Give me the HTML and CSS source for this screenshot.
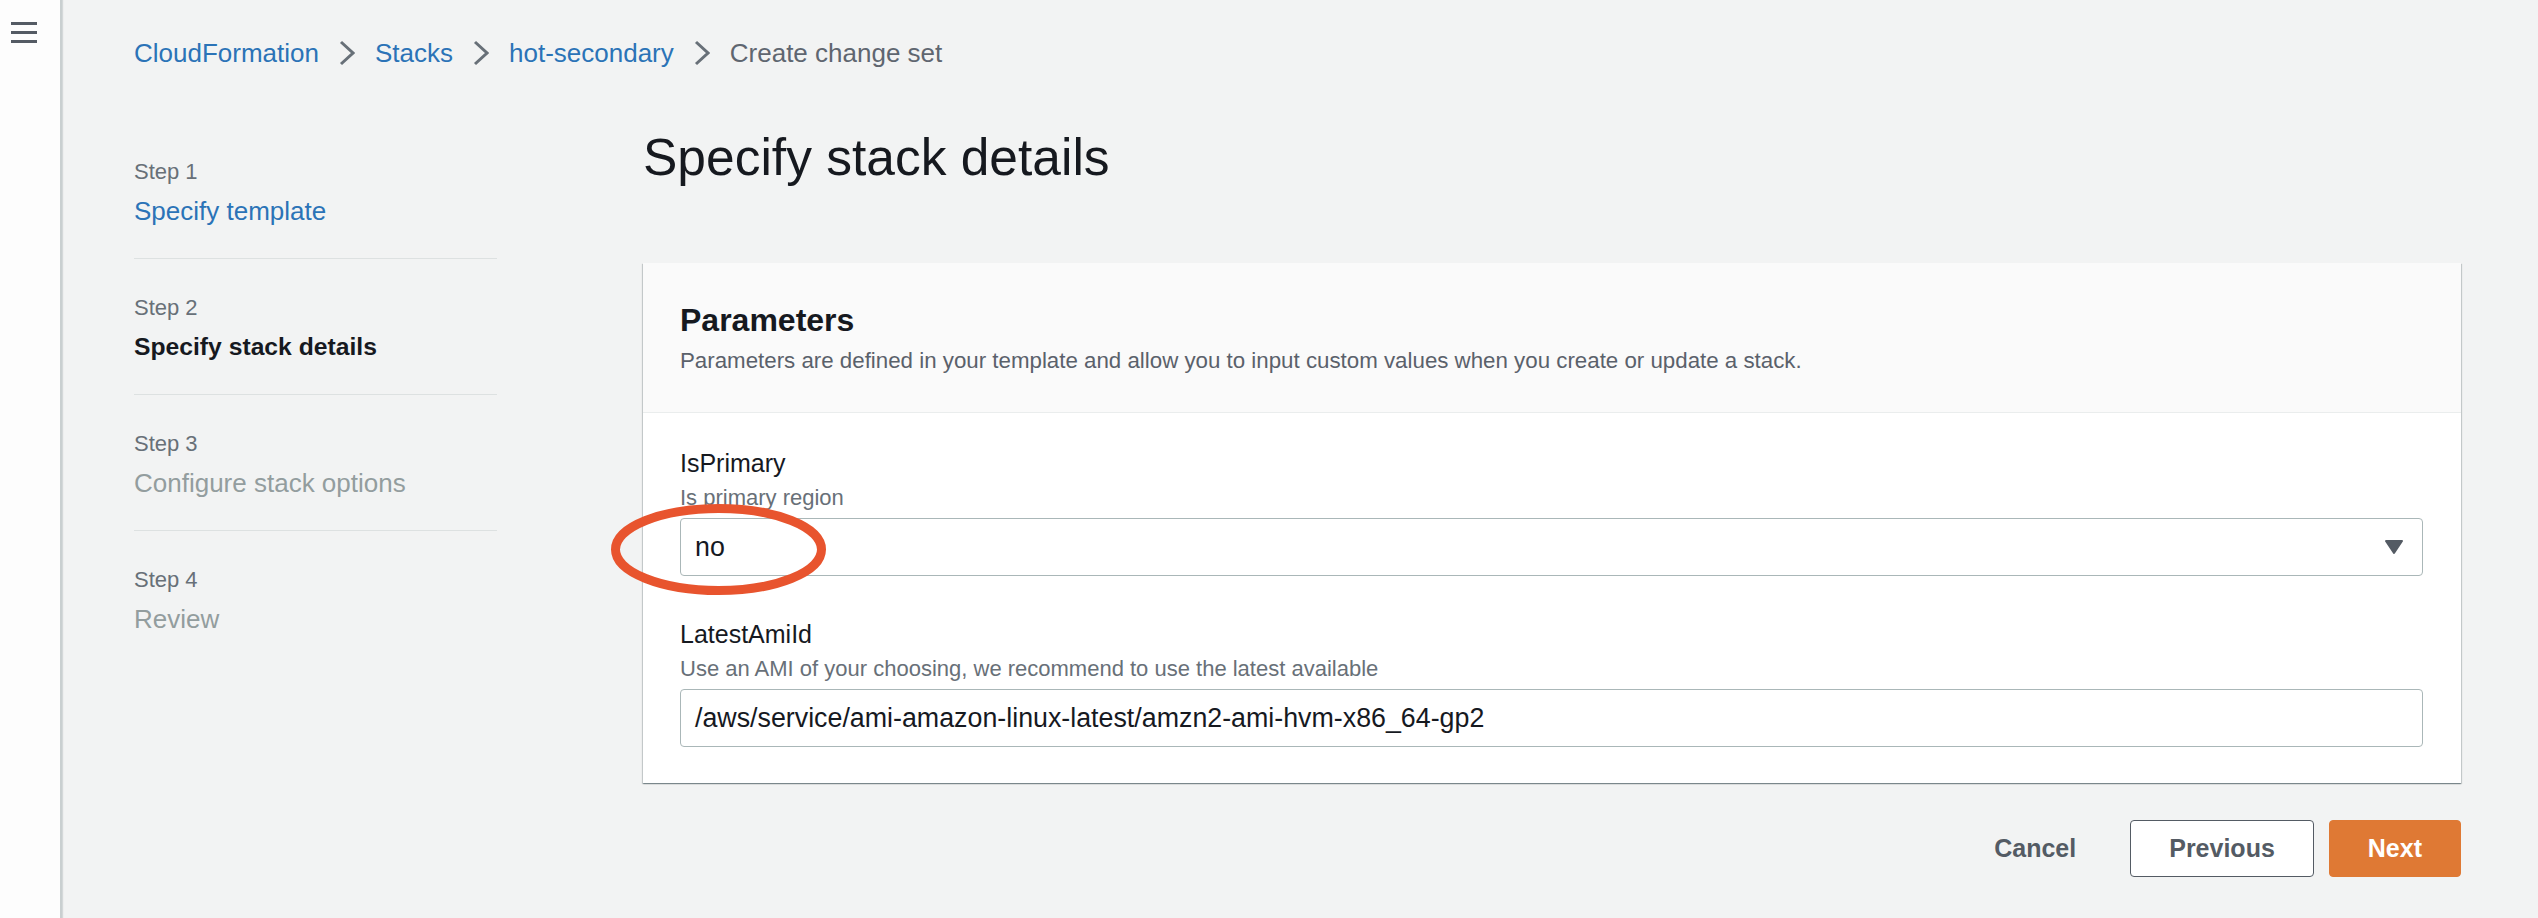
FILE: index.html
```html
<!DOCTYPE html>
<html lang="en">
<head>
<meta charset="utf-8">
<title>Create change set - CloudFormation</title>
<link rel="stylesheet" href="styles.css">
</head>
<body>
<div class="app">
  <aside class="sidebar">
    <button class="menu" aria-label="Open navigation"><span></span><span></span><span></span></button>
  </aside>
  <main class="main">
    <nav class="crumbs">
      <a class="crumb-link">CloudFormation</a>
      <svg class="chev" viewBox="0 0 16 26" width="16" height="26"><polyline points="2,2 14,13 2,24" /></svg>
      <a class="crumb-link">Stacks</a>
      <svg class="chev" viewBox="0 0 16 26" width="16" height="26"><polyline points="2,2 14,13 2,24" /></svg>
      <a class="crumb-link">hot-secondary</a>
      <svg class="chev" viewBox="0 0 16 26" width="16" height="26"><polyline points="2,2 14,13 2,24" /></svg>
      <span class="crumb-current">Create change set</span>
    </nav>
    <div class="layout">
      <ol class="steps">
        <li class="step">
          <div class="step-num">Step 1</div>
          <div class="step-title done">Specify template</div>
        </li>
        <li class="step">
          <div class="step-num">Step 2</div>
          <div class="step-title current">Specify stack details</div>
        </li>
        <li class="step">
          <div class="step-num">Step 3</div>
          <div class="step-title todo">Configure stack options</div>
        </li>
        <li class="step">
          <div class="step-num">Step 4</div>
          <div class="step-title todo">Review</div>
        </li>
      </ol>
      <div class="content">
        <h1 class="page-title">Specify stack details</h1>
        <section class="card">
          <header class="card-head">
            <h2 class="card-title">Parameters</h2>
            <p class="card-desc">Parameters are defined in your template and allow you to input custom values when you create or update a stack.</p>
          </header>
          <div class="card-body">
            <div class="field annotated">
              <div class="field-label">IsPrimary</div>
              <div class="field-hint">Is primary region</div>
              <div class="control select">
                <span class="control-value">no</span>
                <svg class="caret" viewBox="0 0 20 16" width="20" height="16"><polygon points="2,2 18,2 10,14" /></svg>
              </div>
              <svg class="mark" viewBox="0 0 225 101" width="225" height="101"><ellipse cx="112.5" cy="50.5" rx="103" ry="41" /></svg>
            </div>
            <div class="field">
              <div class="field-label">LatestAmiId</div>
              <div class="field-hint">Use an AMI of your choosing, we recommend to use the latest available</div>
              <div class="control input">
                <span class="control-value">/aws/service/ami-amazon-linux-latest/amzn2-ami-hvm-x86_64-gp2</span>
              </div>
            </div>
          </div>
        </section>
        <div class="actions">
          <button class="btn btn-link">Cancel</button>
          <button class="btn btn-normal">Previous</button>
          <button class="btn btn-primary">Next</button>
        </div>
      </div>
    </div>
  </main>
</div>
</body>
</html>
```

FILE: styles.css
```css
* {
  box-sizing: border-box;
}

html, body {
  margin: 0;
  padding: 0;
}

body {
  font-family: "Liberation Sans", Arial, sans-serif;
  background: #f2f3f3;
  color: #16191f;
  overflow: hidden;
}

.app {
  display: flex;
  height: 918px;
}

.sidebar {
  width: 62px;
  flex: none;
  background: #fdfdfd;
  border-right: 2px solid #c9cfd0;
  box-shadow: 1px 0 1px rgba(0, 28, 36, 0.12);
  padding: 22px 0 0 11px;
}

.menu {
  display: flex;
  flex-direction: column;
  gap: 6px;
  padding: 0;
  border: 0;
  background: none;
}

.menu span {
  display: block;
  width: 26px;
  height: 3px;
  background: #545b64;
}

.main {
  flex: 1;
  padding: 38px 77px 0 72px;
}

.crumbs {
  display: flex;
  align-items: center;
  gap: 20px;
  height: 30px;
  font-size: 26px;
  line-height: 30px;
}

.crumb-link {
  color: #2b73b7;
}

.crumb-current {
  color: #5f6670;
}

.chev {
  fill: none;
  stroke: #687078;
  stroke-width: 3;
}

.layout {
  display: grid;
  grid-template-columns: 363px 1fr;
  column-gap: 146px;
  margin-top: 59px;
}

.steps {
  list-style: none;
  margin: 0;
  padding: 31px 0 0;
}

.step {
  padding: 35px 0 31px;
  border-bottom: 1px solid #dde1e1;
}

.step:first-child {
  padding-top: 0;
}

.step:last-child {
  border-bottom: 0;
}

.step-num {
  font-size: 22px;
  line-height: 28px;
  color: #687078;
  margin-bottom: 9px;
}

.step-title {
  font-size: 26px;
  line-height: 32px;
}

.step-title.done {
  color: #2b73b7;
}

.step-title.current {
  font-weight: bold;
  font-size: 24.7px;
  color: #16191f;
}

.step-title.todo {
  color: #939d9e;
}

.page-title {
  margin: 0 0 76px;
  font-size: 51.5px;
  line-height: 60px;
  font-weight: normal;
  color: #16191f;
}

.card {
  background: #fff;
  box-shadow: 0 1px 1px 0 rgba(0, 28, 36, 0.3), 1px 1px 1px 0 rgba(0, 28, 36, 0.15), -1px 1px 1px 0 rgba(0, 28, 36, 0.15);
}

.card-head {
  background: #fafafa;
  border-bottom: 1px solid #eaeded;
  padding: 37px 38px 37px 37px;
}

.card-title {
  margin: 0 0 7px;
  font-size: 32px;
  line-height: 40px;
  font-weight: bold;
}

.card-desc {
  margin: 0;
  font-size: 22.3px;
  line-height: 28px;
  color: #5a616b;
}

.card-body {
  padding: 35px 38px 36px 37px;
  display: flex;
  flex-direction: column;
  gap: 43px;
}

.field {
  position: relative;
}

.field-label {
  font-size: 25px;
  line-height: 30px;
  margin-bottom: 6px;
}

.field-hint {
  font-size: 22px;
  line-height: 28px;
  color: #687078;
  margin-bottom: 6px;
}

.control {
  height: 58px;
  border: 1px solid #aab7b8;
  border-radius: 4px;
  background: #fff;
  display: flex;
  align-items: center;
  justify-content: space-between;
  padding: 0 18px 0 14px;
}

.control-value {
  font-size: 26.8px;
  color: #16191f;
}

.caret {
  fill: #545b64;
  stroke: #545b64;
  stroke-width: 2;
  stroke-linejoin: round;
}

.mark {
  position: absolute;
  left: -74px;
  top: 51px;
  fill: none;
  stroke: #e8542e;
  stroke-width: 9;
}

.actions {
  display: flex;
  justify-content: flex-end;
  align-items: center;
  gap: 15px;
  margin-top: 37px;
}

.btn {
  height: 57px;
  padding: 0 38px;
  border: 1px solid transparent;
  border-radius: 4px;
  font-family: "Liberation Sans", Arial, sans-serif;
  font-size: 25px;
  font-weight: bold;
  background: none;
  color: #545b64;
}

.btn-normal {
  background: #fff;
  border-color: #545b64;
}

.btn-primary {
  background: #df7934;
  border-color: #df7934;
  color: #fff;
}
```
